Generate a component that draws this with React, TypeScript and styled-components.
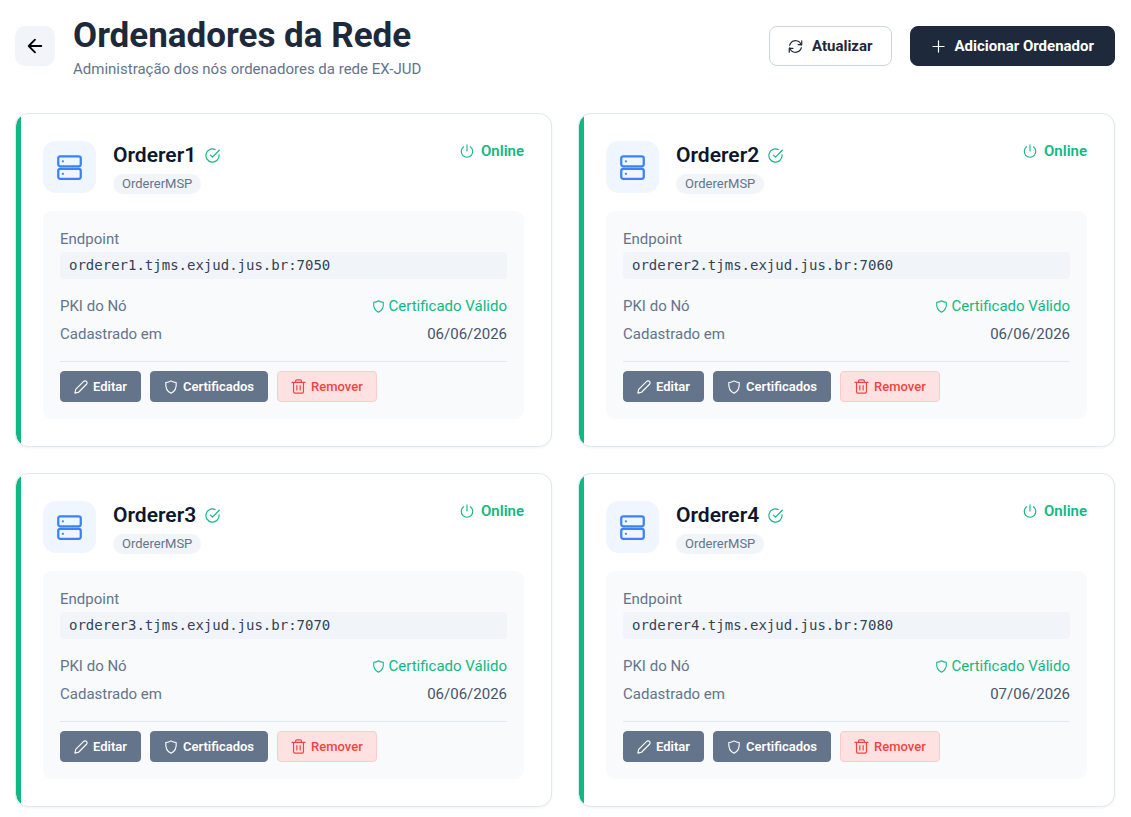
import React from "react";
import styled, { createGlobalStyle, css } from "styled-components";

const GlobalStyle = createGlobalStyle`
  * { box-sizing: border-box; }
  body {
    margin: 0;
    background: #ffffff;
    color: #1e293b;
    font-family: Roboto, sans-serif;
    font-size: 15px;
    line-height: 20px;
  }
  h1, h2, p, dl, dd { margin: 0; }
  button { font-family: inherit; cursor: pointer; }
`;

type IconName = "arrow" | "refresh" | "plus" | "server" | "check" | "power" | "shield" | "pencil" | "trash";

const drawings: Record<IconName, React.ReactNode> = {
  arrow: <path d="M17 10H3.5M10 3L3 10L10 17" strokeWidth="2" />,
  refresh: (
    <>
      <path d="M17.6 8.2A7.9 7.9 0 0 0 3.3 5.8L2.2 8.4M2.4 11.8A7.9 7.9 0 0 0 16.7 14.2L17.8 11.6" />
      <path d="M13.4 7.4H18.3V2.5M6.6 12.6H1.7V17.5" />
    </>
  ),
  plus: <path d="M10 2.6V17.4M2.6 10H17.4" />,
  server: (
    <>
      <rect x="1" y="1" width="18" height="8" rx="1.6" strokeWidth="1.8" />
      <rect x="1" y="11" width="18" height="8" rx="1.6" strokeWidth="1.8" />
      <circle cx="4.7" cy="5" r="0.9" fill="currentColor" stroke="none" />
      <circle cx="4.7" cy="15" r="0.9" fill="currentColor" stroke="none" />
    </>
  ),
  check: <path d="M18.8 9.2V10A8.8 8.8 0 1 1 13.6 2M19 3L10 12.2L7.2 9.4" />,
  power: <path d="M10 1V10M5.2 4A8.2 8.2 0 1 0 14.8 4" />,
  shield: <path d="M10 1.2C7.8 2.8 5.4 3.4 2.6 3.5C2 9.8 3.2 15.8 10 18.9C16.8 15.8 18 9.8 17.4 3.5C14.6 3.4 12.2 2.8 10 1.2Z" />,
  pencil: <path d="M1.3 18.7L2.4 13.4L13.8 2C14.9 0.9 16.7 0.9 17.8 2C19 3.2 19 5 17.9 6.1L6.5 17.5Z" />,
  trash: <path d="M1.4 4.6H18.6M6.2 4.4V2.6C6.2 1.6 6.8 1.1 7.7 1.1H12.3C13.2 1.1 13.8 1.6 13.8 2.6V4.4M3.4 4.8V17C3.4 18.2 4.1 18.9 5.2 18.9H14.8C15.9 18.9 16.6 18.2 16.6 17V4.8M7.8 8.8V14.6M12.2 8.8V14.6" />,
};

const Svg = styled.svg<{ $size: number }>`
  flex: none;
  width: ${(p) => p.$size}px;
  height: ${(p) => p.$size}px;
  fill: none;
  stroke: currentColor;
  stroke-width: 1.6;
  stroke-linecap: round;
  stroke-linejoin: round;
`;

const Icon = ({ name, size }: { name: IconName; size: number }) => (
  <Svg $size={size} viewBox="0 0 20 20" aria-hidden="true">
    {drawings[name]}
  </Svg>
);

const Page = styled.main`
  padding: 13px 16px 10px 15px;
`;

const Header = styled.header`
  display: flex;
  justify-content: space-between;
  align-items: center;
  margin-bottom: 34px;
`;

const Heading = styled.div`
  display: flex;
  align-items: center;
  gap: 18px;
`;

const BackButton = styled.button`
  display: grid;
  place-items: center;
  width: 40px;
  height: 40px;
  padding: 0;
  border: 0;
  border-radius: 10px;
  background: #f1f5f9;
  color: #000000;
`;

const Title = styled.h1`
  font-size: 35px;
  line-height: 46px;
  font-weight: 700;
  color: #1e293b;
`;

const Subtitle = styled.p`
  color: #64748b;
`;

const Actions = styled.div`
  display: flex;
  gap: 18px;
`;

const HeaderButton = styled.button<{ $primary?: boolean }>`
  display: flex;
  align-items: center;
  gap: 9px;
  height: 40px;
  padding: 0 ${(p) => (p.$primary ? 20 : 18)}px;
  border: 1px solid ${(p) => (p.$primary ? "#1e293b" : "#cbd5e1")};
  border-radius: 8px;
  background: ${(p) => (p.$primary ? "#1e293b" : "#ffffff")};
  color: ${(p) => (p.$primary ? "#ffffff" : "#1e293b")};
  font-size: 15px;
  font-weight: 700;
`;

const Grid = styled.div`
  display: grid;
  grid-template-columns: repeat(2, minmax(0, 1fr));
  gap: 26px;
`;

const Card = styled.article`
  padding: 27px;
  border: 1px solid #e2e8f0;
  border-radius: 13px;
  background: linear-gradient(#10b981, #10b981) left / 5px 100% no-repeat padding-box #ffffff;
  box-shadow: 0 1px 3px rgba(0, 0, 0, 0.05);
`;

const CardHeader = styled.div`
  display: flex;
  align-items: flex-start;
  margin-bottom: 17px;
`;

const ServerBadge = styled.div`
  display: grid;
  place-items: center;
  width: 53px;
  height: 52px;
  margin-right: 17px;
  border-radius: 13px;
  background: #eff6ff;
  color: #3b82f6;
`;

const Identity = styled.div`
  display: flex;
  flex-direction: column;
  align-items: flex-start;
  gap: 5px;
  flex: 1;
  padding-top: 1px;
`;

const NameRow = styled.div`
  display: flex;
  align-items: center;
  gap: 9px;
  color: #10b981;
`;

const Name = styled.h2`
  font-size: 21px;
  line-height: 27px;
  font-weight: 600;
  color: #0f172a;
`;

const Msp = styled.span`
  padding: 0 9px;
  border-radius: 10px;
  background: #f1f5f9;
  color: #64748b;
  font-size: 13px;
  line-height: 20px;
`;

const Status = styled.span`
  display: flex;
  align-items: center;
  gap: 7px;
  color: #10b981;
  font-weight: 600;
`;

const Details = styled.div`
  padding: 18px 17px 17px;
  border-radius: 9px;
  background: #f8fafc;
`;

const Facts = styled.dl`
  color: #64748b;
`;

const Endpoint = styled.dd`
  margin: 3px 0 17px;
  padding: 0 9px;
  border-radius: 4px;
  background: #f1f5f9;
  color: #334155;
  font-family: Consolas, "DejaVu Sans Mono", monospace;
  font-size: 14px;
  line-height: 27px;
`;

const Fact = styled.div`
  display: flex;
  justify-content: space-between;
  margin-bottom: 8px;
`;

const Value = styled.dd<{ $valid?: boolean }>`
  display: flex;
  align-items: center;
  gap: 4px;
  color: ${(p) => (p.$valid ? "#10b981" : "#475569")};
`;

const CardActions = styled.div`
  display: flex;
  gap: 9px;
  margin-top: 17px;
  padding-top: 9px;
  border-top: 1px solid #e2e8f0;
`;

const ActionButton = styled.button<{ $danger?: boolean }>`
  display: flex;
  align-items: center;
  gap: 5px;
  height: 31px;
  padding: 0 13px;
  border: 1px solid #64748b;
  border-radius: 4px;
  background: #64748b;
  color: #ffffff;
  font-size: 13px;
  font-weight: 600;
  ${(p) =>
    p.$danger &&
    css`
      border-color: #fecaca;
      background: #fee2e2;
      color: #ef4444;
      font-weight: 500;
    `}
`;

const orderers = [
  { name: "Orderer1", endpoint: "orderer1.tjms.exjud.jus.br:7050", date: "06/06/2026" },
  { name: "Orderer2", endpoint: "orderer2.tjms.exjud.jus.br:7060", date: "06/06/2026" },
  { name: "Orderer3", endpoint: "orderer3.tjms.exjud.jus.br:7070", date: "06/06/2026" },
  { name: "Orderer4", endpoint: "orderer4.tjms.exjud.jus.br:7080", date: "07/06/2026" },
];

const OrdererCard = ({ name, endpoint, date }: (typeof orderers)[number]) => (
  <Card>
    <CardHeader>
      <ServerBadge>
        <Icon name="server" size={25} />
      </ServerBadge>
      <Identity>
        <NameRow>
          <Name>{name}</Name>
          <Icon name="check" size={15} />
        </NameRow>
        <Msp>OrdererMSP</Msp>
      </Identity>
      <Status>
        <Icon name="power" size={14} />
        Online
      </Status>
    </CardHeader>
    <Details>
      <Facts>
        <dt>Endpoint</dt>
        <Endpoint>{endpoint}</Endpoint>
        <Fact>
          <dt>PKI do Nó</dt>
          <Value $valid>
            <Icon name="shield" size={13} />
            Certificado Válido
          </Value>
        </Fact>
        <Fact>
          <dt>Cadastrado em</dt>
          <Value>{date}</Value>
        </Fact>
      </Facts>
      <CardActions>
        <ActionButton type="button">
          <Icon name="pencil" size={14} />
          Editar
        </ActionButton>
        <ActionButton type="button">
          <Icon name="shield" size={14} />
          Certificados
        </ActionButton>
        <ActionButton type="button" $danger>
          <Icon name="trash" size={15} />
          Remover
        </ActionButton>
      </CardActions>
    </Details>
  </Card>
);

export default function App() {
  return (
    <>
      <GlobalStyle />
      <Page>
        <Header>
          <Heading>
            <BackButton type="button" aria-label="Voltar">
              <Icon name="arrow" size={18} />
            </BackButton>
            <div>
              <Title>Ordenadores da Rede</Title>
              <Subtitle>Administração dos nós ordenadores da rede EX-JUD</Subtitle>
            </div>
          </Heading>
          <Actions>
            <HeaderButton type="button">
              <Icon name="refresh" size={15} />
              Atualizar
            </HeaderButton>
            <HeaderButton type="button" $primary>
              <Icon name="plus" size={15} />
              Adicionar Ordenador
            </HeaderButton>
          </Actions>
        </Header>
        <Grid>
          {orderers.map((o) => (
            <OrdererCard key={o.name} {...o} />
          ))}
        </Grid>
      </Page>
    </>
  );
}
